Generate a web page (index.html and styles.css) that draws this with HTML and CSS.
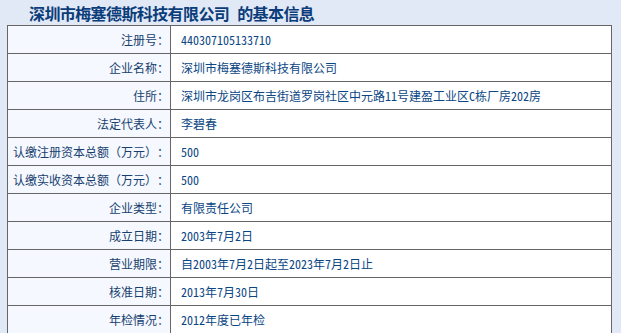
FILE: index.html
```html
<!DOCTYPE html>
<html lang="zh-CN">
<head>
<meta charset="utf-8">
<title>深圳市梅塞德斯科技有限公司 的基本信息</title>
<link rel="stylesheet" href="styles.css">
</head>
<body>
<h1 class="title"><span class="company">深圳市梅塞德斯科技有限公司</span><span>的基本信息</span></h1>
<div class="info">
  <div class="row"><div class="label">注册号：</div><div class="value">440307105133710</div></div>
  <div class="row"><div class="label">企业名称：</div><div class="value">深圳市梅塞德斯科技有限公司</div></div>
  <div class="row"><div class="label">住所：</div><div class="value">深圳市龙岗区布吉街道罗岗社区中元路11号建盈工业区C栋厂房202房</div></div>
  <div class="row"><div class="label">法定代表人：</div><div class="value">李碧春</div></div>
  <div class="row"><div class="label">认缴注册资本总额（万元）：</div><div class="value">500</div></div>
  <div class="row"><div class="label">认缴实收资本总额（万元）：</div><div class="value">500</div></div>
  <div class="row"><div class="label">企业类型：</div><div class="value">有限责任公司</div></div>
  <div class="row"><div class="label">成立日期：</div><div class="value">2003年7月2日</div></div>
  <div class="row"><div class="label">营业期限：</div><div class="value">自2003年7月2日起至2023年7月2日止</div></div>
  <div class="row"><div class="label">核准日期：</div><div class="value">2013年7月30日</div></div>
  <div class="row"><div class="label">年检情况：</div><div class="value">2012年度已年检</div></div>
</div>
</body>
</html>
```
FILE: styles.css
```css
html, body {
  margin: 0;
  padding: 0;
  background: #e1e8f6;
}
body {
  font-family: "Noto Sans CJK SC", "Liberation Sans", sans-serif;
  color: #0b3e78;
  font-size: 12px;
  text-spacing-trim: space-all;
}
.title {
  margin: 0;
  padding: 1px 0 0 29px;
  height: 24px;
  line-height: 24px;
  font-size: 16px;
  font-weight: bold;
  color: #0b3d7a;
  white-space: nowrap;
  letter-spacing: -0.6px;
}
.company {
  margin-right: 8px;
}
.info {
  margin-left: 7px;
  width: 603px;
  border: 1px solid #666;
  border-bottom: none;
  background: #fff;
}
.row {
  display: flex;
  height: 27px;
  border-bottom: 1px solid #666;
}
.label {
  width: 161px;
  padding-right: 1px;
  border-right: 1px solid #666;
  background: #f5f8fe;
  text-align: right;
  line-height: 27px;
  white-space: nowrap;
  color: #173f6f;
}
.value {
  flex: 1;
  padding-left: 10px;
  line-height: 27px;
  white-space: nowrap;
  color: #0a4684;
  font-feature-settings: "hwid";
}
```
